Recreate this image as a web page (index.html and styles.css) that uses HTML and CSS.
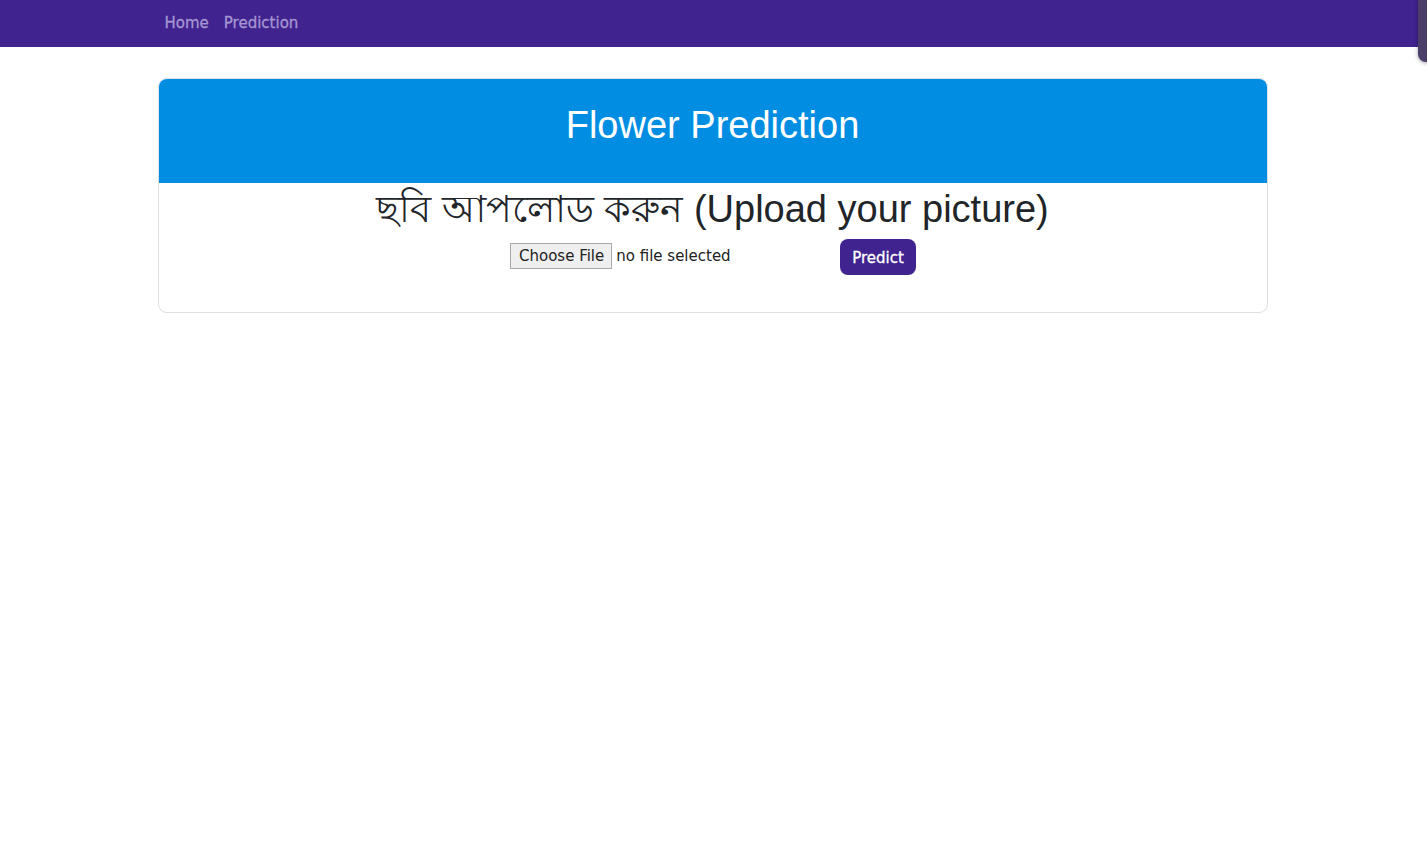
FILE: index.html
```html
<!DOCTYPE html>
<html lang="bn">
<head>
<meta charset="utf-8">
<title>Flower Prediction</title>
<link rel="stylesheet" href="styles.css">
</head>
<body>
<nav class="navbar">
  <div class="nav-inner">
    <a class="nav-link" href="#">Home</a>
    <a class="nav-link" href="#">Prediction</a>
  </div>
</nav>
<div class="side-tab"></div>
<main class="container">
  <section class="card">
    <header class="card-header">
      <h2 class="card-title">Flower Prediction</h2>
    </header>
    <div class="card-body">
      <h1 class="upload-title">ছবি আপলোড করুন (Upload your picture)</h1>
      <form class="upload-form">
        <label class="file-field">
          <span class="file-btn">Choose File</span>
          <span class="file-name">no file selected</span>
        </label>
        <button type="button" class="predict-btn">Predict</button>
      </form>
    </div>
  </section>
</main>
</body>
</html>
```

FILE: styles.css
```css
* { box-sizing: border-box; }
html, body { margin: 0; padding: 0; background: #fff; }
body {
  font-family: "Liberation Sans", Arial, "Noto Sans", sans-serif;
  color: #212529;
}
.navbar {
  background: #40238f;
  height: 47px;
}
.nav-inner {
  width: 1140px;
  margin: 0 auto;
  display: flex;
  align-items: center;
  height: 100%;
  padding-left: 21px;
  gap: 15px;
}
.nav-link {
  font-family: "DejaVu Sans", Verdana, sans-serif;
  font-size: 15px;
  color: #a596d2;
  text-decoration: none;
  -webkit-text-stroke: 0.3px #a596d2;
  padding-bottom: 2px;
}
.side-tab {
  position: fixed;
  top: -8px;
  right: -12px;
  width: 21px;
  height: 70px;
  background: #4b3e69;
  border-radius: 8px;
  box-shadow: 0 1px 4px rgba(0,0,0,0.35);
}
.container {
  width: 1140px;
  margin: 0 auto;
  padding: 31px 16px 0 14px;
}
.card {
  border: 1px solid #dcdfe3;
  border-radius: 9px;
  overflow: hidden;
}
.card-header {
  background: #018ee2;
  height: 105px;
  margin: -1px -1px 0;
  padding-top: 25px;
  text-align: center;
}
.card-title {
  margin: 0;
  color: #fff;
  font-weight: 400;
  font-size: 38px;
  line-height: 1.2;
}
.card-body {
  text-align: center;
  padding: 0 0 37px;
}
.upload-title {
  margin: 0;
  padding-top: 4px;
  font-weight: 400;
  font-size: 38px;
  line-height: 1.2;
  height: 48px;
  color: #212529;
}
.upload-form {
  margin-top: 8px;
  display: flex;
  justify-content: center;
  align-items: center;
  padding-left: 1px;
}
.file-field {
  width: 330px;
  display: flex;
  align-items: center;
  gap: 4px;
  font-family: "DejaVu Sans", Verdana, sans-serif;
  font-size: 15px;
  text-align: left;
  margin-top: -2px;
}
.file-btn {
  display: inline-block;
  height: 26px;
  line-height: 24px;
  padding: 0 7px 0 8px;
  border: 1px solid #a9a9a9;
  background: #efefef;
  color: #222;
  font-size: 15px;
}
.file-name {
  color: #222;
}
.predict-btn {
  font-family: "DejaVu Sans", Verdana, sans-serif;
  font-size: 15px;
  color: #fff;
  background: #40238f;
  border: none;
  border-radius: 8px;
  height: 36px;
  width: 76px;
  padding: 2px 0 0;
  -webkit-text-stroke: 0.3px #fff;
}
```
